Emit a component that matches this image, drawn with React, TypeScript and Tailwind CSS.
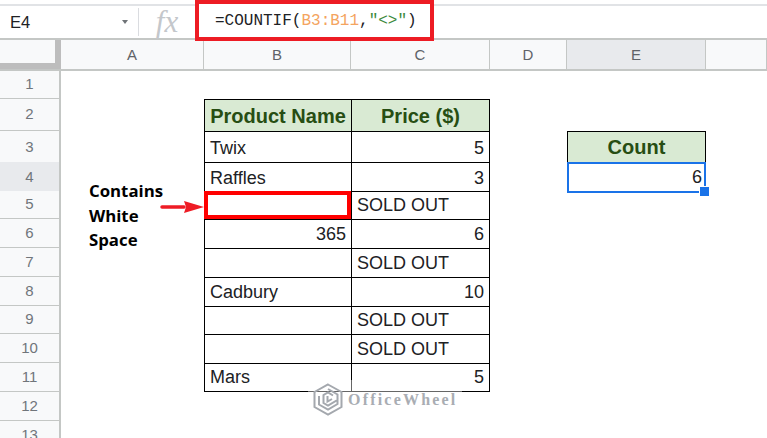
const cols = "grid grid-cols-[61px_143px_147px_139px_77px_139px_61px]";

const rows = [
  { n: 1, h: "h-[28px]" },
  { n: 2, h: "h-[32px]", b: "Product Name", c: "Price ($)", head: true },
  { n: 3, h: "h-[31px]", b: "Twix", c: "5", cRight: true, e: "Count" },
  { n: 4, h: "h-[29px]", b: "Raffles", c: "3", cRight: true, e: "6" },
  { n: 5, h: "h-[28px]", c: "SOLD OUT", red: true },
  { n: 6, h: "h-[29px]", b: "365", bRight: true, c: "6", cRight: true },
  { n: 7, h: "h-[29px]", c: "SOLD OUT" },
  { n: 8, h: "h-[29px]", b: "Cadbury", c: "10", cRight: true },
  { n: 9, h: "h-[28px]", c: "SOLD OUT" },
  { n: 10, h: "h-[29px]", c: "SOLD OUT" },
  { n: 11, h: "h-[29px]", b: "Mars", c: "5", cRight: true, last: true },
  { n: 12, h: "h-[29px]" },
  { n: 13, h: "h-[29px]" },
];

function ColHeader({ label, active }: { label: string; active?: boolean }) {
  return (
    <div className={`flex items-center justify-center border-r border-[#c4c7c5] pt-[1px] text-[15px] text-[#5f6368] ${active ? "bg-[#e8eaed]" : "bg-[#f8f9fa]"}`}>
      {label}
    </div>
  );
}

function Logo() {
  return (
    <svg width="30" height="33" viewBox="0 0 30 33" fill="none" stroke="#a4a8ae" strokeWidth="2">
      <path d="M15 1.5 L28.5 9 V24 L15 31.5 L1.5 24 V9 Z" />
      <path d="M15 6 L24.5 11.5 V16 M6 13 V21.5 L15 26.5 L24.5 21 V17 L15 22.5 L10.5 20 V12 L15 9.5 L20 12.5" />
      <path d="M14.5 13 V18.5 L19 16" />
    </svg>
  );
}

export default function App() {
  return (
    <div className="relative h-[438px] w-[767px] overflow-hidden bg-white font-['Liberation_Sans',Arial,sans-serif] text-[#202124]">
      {/* formula bar */}
      <div className="mt-1 flex h-[34px] border-t-2 border-[#e1e3e6]">
        <div className="flex w-[138px] items-center justify-between pl-[10px] pr-[10px] text-[16.5px]">
          <span>E4</span>
          <span className="h-0 w-0 border-x-[3.5px] border-t-[4px] border-x-transparent border-t-[#6f7377]" />
        </div>
        <div className="my-[2px] w-px bg-[#dadce0]" />
        <div className="flex w-[56px] items-center justify-center font-['Liberation_Serif',serif] text-[31px] italic text-[#c4c7cb]">
          fx
        </div>
        <div className="relative z-10 -mt-[6px] flex h-[41px] w-[239px] shrink-0 items-center border-[4px] border-[#ed1c24] bg-white pl-4 font-['Liberation_Mono',monospace] text-[16px] whitespace-pre">
          <span>=COUNTIF(</span>
          <span className="text-[#f4a460]">B3:B11</span>
          <span>,</span>
          <span className="text-[#3c8a3c]">"&lt;&gt;"</span>
          <span>)</span>
        </div>
      </div>

      {/* column headers */}
      <div className={`${cols} h-[33px] border-y-2 border-[#c4c7c5]`}>
        <div className="border-r-[6px] border-b-[6px] border-[#bdbdbd] bg-[#f8f9fa]" />
        <ColHeader label="A" />
        <ColHeader label="B" />
        <ColHeader label="C" />
        <ColHeader label="D" />
        <ColHeader label="E" active />
        <ColHeader label="" />
      </div>

      {/* sheet */}
      {rows.map((r) => (
        <div key={r.n} className={`${cols} ${r.h}`}>
          <div className={`flex items-center justify-center border-r-2 border-b border-[#c4c7c5] text-[15px] text-[#70757a] ${r.n === 4 ? "bg-[#e8eaed]" : "bg-[#f8f9fa]"}`}>
            {r.n}
          </div>
          <div />
          {r.n >= 2 && r.n <= 11 ? (
            <div
              className={`flex items-center whitespace-nowrap ${r.bRight ? "justify-end" : ""} ${
                r.red ? "border-[4px] border-[#ff0000]" : "border-l border-t border-black"
              } ${r.head ? "justify-center bg-[#d9ead3] text-[20px] font-bold text-[#274e13]" : "px-[5px] text-[18px]"} ${r.last ? "border-b" : ""}`}
            >
              {r.b}
            </div>
          ) : (
            <div />
          )}
          {r.n >= 2 && r.n <= 11 ? (
            <div
              className={`flex items-center whitespace-nowrap border-l border-r border-t border-black ${r.cRight ? "justify-end" : ""} ${
                r.head ? "justify-center bg-[#d9ead3] text-[20px] font-bold text-[#274e13]" : "px-[5px] text-[18px]"
              } ${r.last ? "border-b" : ""}`}
            >
              {r.c}
            </div>
          ) : (
            <div />
          )}
          <div />
          {r.n === 3 && (
            <div className="flex items-center justify-center border border-black border-b-0 bg-[#d9ead3] pb-[2px] text-[20px] font-bold text-[#274e13]">
              {r.e}
            </div>
          )}
          {r.n === 4 && (
            <div className="relative flex items-center justify-end border-[2px] border-[#1a73e8] px-[2px] text-[18px]">
              {r.e}
              <span className="absolute -right-[5px] -bottom-[5px] h-[9px] w-[9px] bg-[#1a73e8] outline outline-white" />
            </div>
          )}
          {r.n !== 3 && r.n !== 4 && <div />}
        </div>
      ))}

      {/* annotation */}
      <div className="absolute left-[89px] top-[179px] font-['Open_Sans',sans-serif] text-[16.8px] leading-[24.5px] font-bold text-black">
        <div>Contains</div>
        <div>White</div>
        <div>Space</div>
      </div>
      <svg className="absolute left-[160px] top-[199px]" width="45" height="16" viewBox="0 0 45 16">
        <path d="M2 8 H24" stroke="#ee1c25" strokeWidth="3.5" strokeLinecap="round" />
        <path d="M24 2 L44 8 L24 14 L26 8 Z" fill="#ee1c25" />
      </svg>

      {/* watermark */}
      <div className="absolute left-[308px] top-[380px] flex items-center gap-[5px] bg-white/40 pt-[3px] pr-[4px] pl-[5px]">
        <Logo />
        <span className="font-['Liberation_Serif',serif] text-[16px] font-bold tracking-[2.2px] text-[#a9adb3]">
          OfficeWheel
        </span>
      </div>
    </div>
  );
}
